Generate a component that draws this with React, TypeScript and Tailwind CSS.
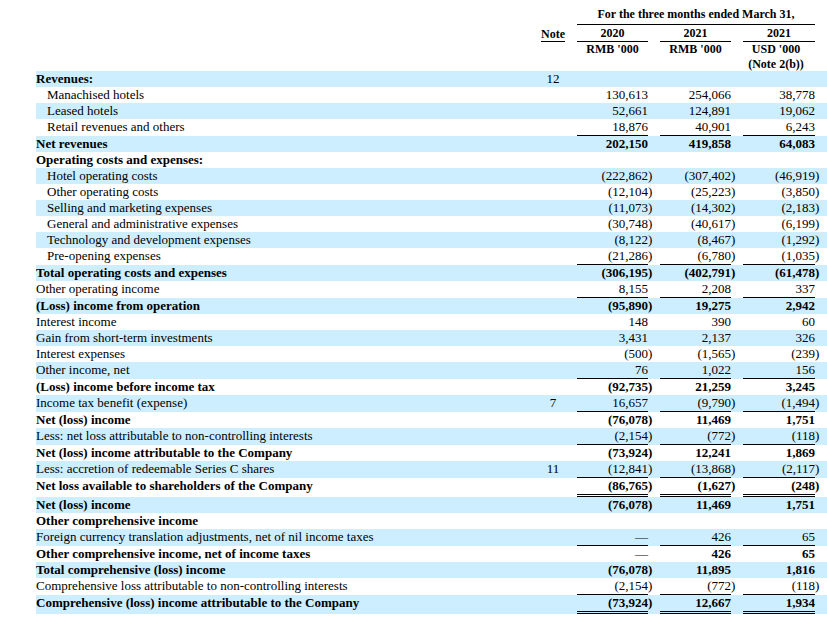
import React from "react";

type Row = {
  l: string;
  b?: boolean;
  i?: boolean;
  note?: string;
  v?: [string, string, string];
  line?: "s" | "d";
};

const rows: Row[] = [
  { l: "Revenues:", b: true, note: "12" },
  { l: "Manachised hotels", i: true, v: ["130,613", "254,066", "38,778"] },
  { l: "Leased hotels", i: true, v: ["52,661", "124,891", "19,062"] },
  { l: "Retail revenues and others", i: true, v: ["18,876", "40,901", "6,243"], line: "s" },
  { l: "Net revenues", b: true, v: ["202,150", "419,858", "64,083"] },
  { l: "Operating costs and expenses:", b: true },
  { l: "Hotel operating costs", i: true, v: ["(222,862)", "(307,402)", "(46,919)"] },
  { l: "Other operating costs", i: true, v: ["(12,104)", "(25,223)", "(3,850)"] },
  { l: "Selling and marketing expenses", i: true, v: ["(11,073)", "(14,302)", "(2,183)"] },
  { l: "General and administrative expenses", i: true, v: ["(30,748)", "(40,617)", "(6,199)"] },
  { l: "Technology and development expenses", i: true, v: ["(8,122)", "(8,467)", "(1,292)"] },
  { l: "Pre-opening expenses", i: true, v: ["(21,286)", "(6,780)", "(1,035)"], line: "s" },
  { l: "Total operating costs and expenses", b: true, v: ["(306,195)", "(402,791)", "(61,478)"] },
  { l: "Other operating income", v: ["8,155", "2,208", "337"], line: "s" },
  { l: "(Loss) income from operation", b: true, v: ["(95,890)", "19,275", "2,942"] },
  { l: "Interest income", v: ["148", "390", "60"] },
  { l: "Gain from short-term investments", v: ["3,431", "2,137", "326"] },
  { l: "Interest expenses", v: ["(500)", "(1,565)", "(239)"] },
  { l: "Other income, net", v: ["76", "1,022", "156"], line: "s" },
  { l: "(Loss) income before income tax", b: true, v: ["(92,735)", "21,259", "3,245"] },
  { l: "Income tax benefit (expense)", note: "7", v: ["16,657", "(9,790)", "(1,494)"], line: "s" },
  { l: "Net (loss) income", b: true, v: ["(76,078)", "11,469", "1,751"] },
  { l: "Less: net loss attributable to non-controlling interests", v: ["(2,154)", "(772)", "(118)"], line: "s" },
  { l: "Net (loss) income attributable to the Company", b: true, v: ["(73,924)", "12,241", "1,869"] },
  { l: "Less: accretion of redeemable Series C shares", note: "11", v: ["(12,841)", "(13,868)", "(2,117)"], line: "s" },
  { l: "Net loss available to shareholders of the Company", b: true, v: ["(86,765)", "(1,627)", "(248)"], line: "d" },
  { l: "Net (loss) income", b: true, v: ["(76,078)", "11,469", "1,751"] },
  { l: "Other comprehensive income", b: true },
  { l: "Foreign currency translation adjustments, net of nil income taxes", v: ["—", "426", "65"], line: "s" },
  { l: "Other comprehensive income, net of income taxes", b: true, v: ["—", "426", "65"] },
  { l: "Total comprehensive (loss) income", b: true, v: ["(76,078)", "11,895", "1,816"] },
  { l: "Comprehensive loss attributable to non-controlling interests", v: ["(2,154)", "(772)", "(118)"], line: "s" },
  { l: "Comprehensive (loss) income attributable to the Company", b: true, v: ["(73,924)", "12,667", "1,934"], line: "d" },
];

const GRID =
  "grid grid-cols-[500px_34px_7px_71px_4px_8px_71px_4px_8px_72px_4px_4px]";

function ValueCells({ value, bold, line }: { value: string; bold?: boolean; line?: "s" | "d" }) {
  const hasParen = value.endsWith(")");
  const main = hasParen ? value.slice(0, -1) : value;
  const lineCls =
    line === "s"
      ? "border-b border-black"
      : line === "d"
      ? "border-b-[3px] border-double border-black"
      : "";
  const isDash = value === "—";
  return (
    <>
      <div className={`text-right whitespace-nowrap ${lineCls} ${bold && !isDash ? "font-bold" : ""}`}>{main || "\u00a0"}</div>
      <div className={`whitespace-nowrap ${bold ? "font-bold" : ""}`}>{hasParen ? ")" : ""}</div>
    </>
  );
}

function BodyRow({ r, idx }: { r: Row; idx: number }) {
  const bg = idx % 2 === 0 ? "bg-[#cceeff]" : "bg-white";
  const v = r.v ?? ["", "", ""];
  return (
    <div className={`${GRID} ${bg} items-start`}>
      <div className={`${r.b ? "font-bold" : ""} ${r.i ? "pl-[11px]" : ""} whitespace-nowrap`}>{r.l}</div>
      <div className="text-center">{r.note ?? ""}</div>
      <div />
      <ValueCells value={v[0]} bold={r.b} line={r.line} />
      <div />
      <ValueCells value={v[1]} bold={r.b} line={r.line} />
      <div />
      <ValueCells value={v[2]} bold={r.b} line={r.line} />
      <div />
    </div>
  );
}

export default function App() {
  return (
    <div className="bg-white text-black w-[827px] h-[618px] overflow-hidden font-['Liberation_Serif','Times_New_Roman',serif] leading-[16px]">
      <div className="pl-[36px]">
        {/* Header */}
        <div className="font-bold text-[12px]">
          <div className={`${GRID} h-[25px]`}>
            <div className="col-start-4 col-end-11 text-center pt-[6px] border-b border-black h-[25px]">
              For the three months ended March 31,
            </div>
          </div>
          <div className={`${GRID} items-start`}>
            <div />
            <div className="text-center pt-[1px]">
              <span className="inline-block leading-[13px] border-b border-black">Note</span>
            </div>
            <div />
            <div className="text-center border-b border-black">2020</div>
            <div />
            <div />
            <div className="text-center border-b border-black">2021</div>
            <div />
            <div />
            <div className="text-center border-b border-black">2021</div>
            <div />
            <div />
          </div>
          <div className={`${GRID} h-[29px] leading-[15px] items-start`}>
            <div />
            <div />
            <div />
            <div className="text-center">RMB '000</div>
            <div />
            <div />
            <div className="text-center">RMB '000</div>
            <div />
            <div />
            <div className="text-center pr-[6px] whitespace-nowrap">
              USD '000
              <br />
              (Note 2(b))
            </div>
            <div />
            <div />
          </div>
        </div>
        {/* Body */}
        <div className="text-[13px]">
          {rows.map((r, idx) => (
            <BodyRow key={idx} r={r} idx={idx} />
          ))}
        </div>
      </div>
    </div>
  );
}
